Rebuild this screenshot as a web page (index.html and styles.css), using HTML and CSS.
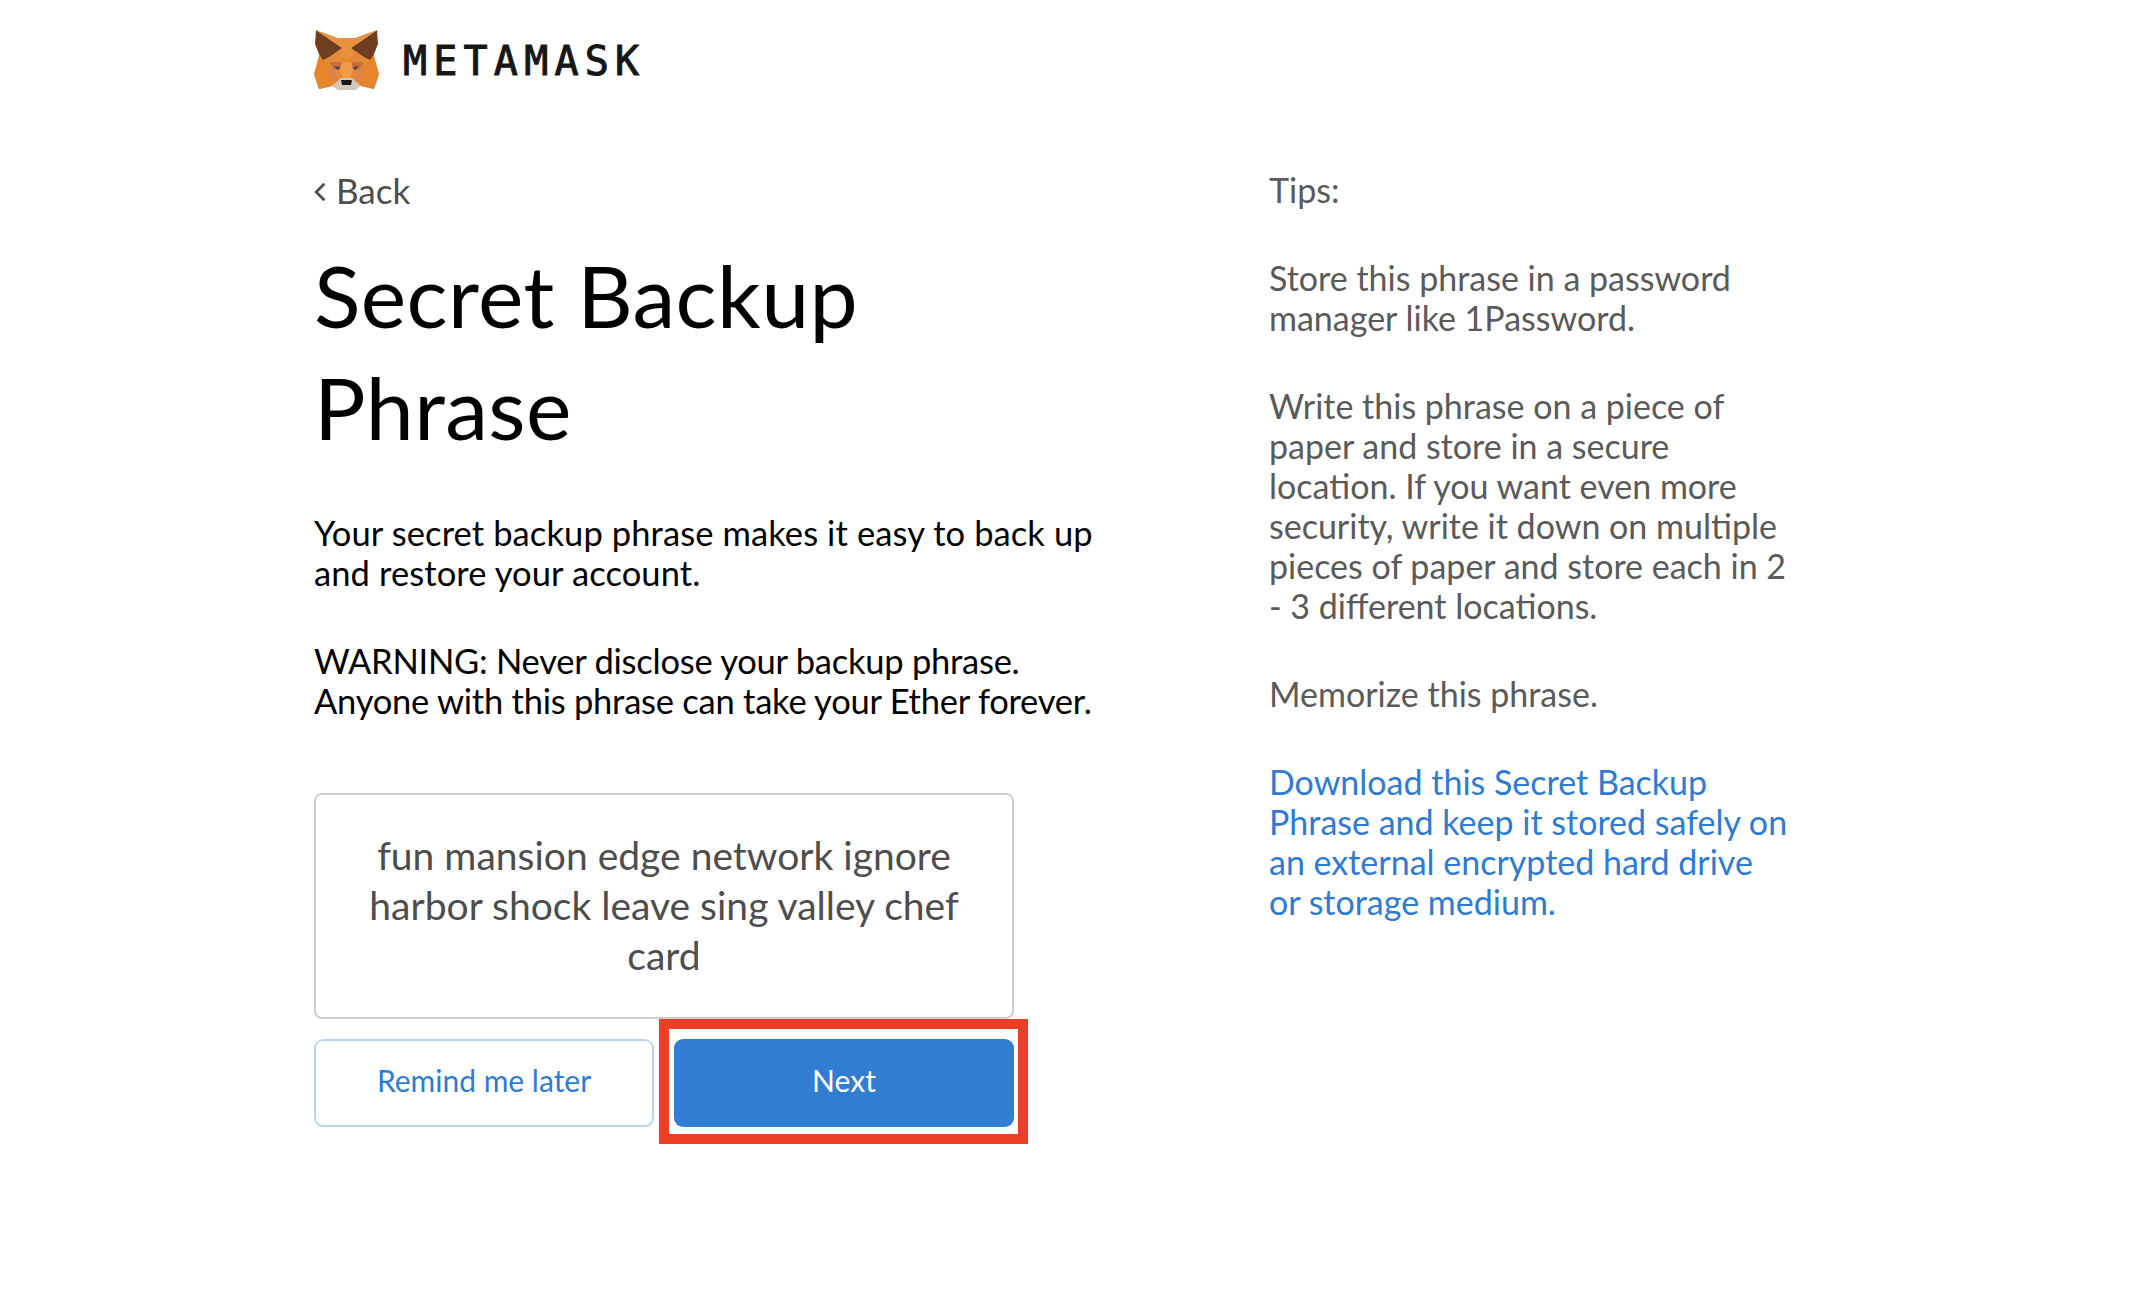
FILE: index.html
```html
<!DOCTYPE html>
<html lang="en">
<head>
<meta charset="utf-8">
<title>MetaMask</title>
<link rel="stylesheet" href="styles.css">
</head>
<body>
<div class="page">
  <header class="brand">
    <svg class="fox" viewBox="0 0 65 60" aria-hidden="true">
      <polygon fill="#e8842a" points="0,44 6,22 16,13 49,13 59,22 65,44 60,59 47,56 41,52 24,52 18,56 5,59"/>
      <polygon fill="#e9913f" points="24,8 41,8 39,26 33,30 26,26"/>
      <polygon fill="#e38a39" points="15,27 24,19 28,30 25,52 20,40 9,30"/>
      <polygon fill="#e38a39" points="50,27 41,19 37,30 40,52 45,40 56,30"/>
      <polygon fill="#c9703a" points="15,32 28,32 26,40 20,40"/>
      <polygon fill="#c9703a" points="50,32 37,32 39,40 45,40"/>
      <polygon fill="#f09a4a" points="28,32 37,32 39,40 36,48 29,48 26,40"/>
      <polygon fill="#e8842a" points="0,44 13,38 20,50 18,56 5,59"/>
      <polygon fill="#e8842a" points="65,44 52,38 45,50 47,56 60,59"/>
      <polygon fill="#d88356" points="13,38 20,40 25,52 20,50"/>
      <polygon fill="#d88356" points="52,38 45,40 40,52 45,50"/>
      <polygon fill="#6f3d1f" points="2,0 28,18 15,27 9,30 5,24 1,14"/>
      <polygon fill="#6f3d1f" points="63,0 37,18 50,27 56,30 60,24 64,14"/>
      <polygon fill="#e9913f" points="2,0 24,8 28,18"/>
      <polygon fill="#e9913f" points="63,0 41,8 37,18"/>
      <polygon fill="#3a3f55" points="20,36 26,37 24,40"/>
      <polygon fill="#3a3f55" points="45,36 39,37 41,40"/>
      <polygon fill="#d3c7bb" points="18,56 27,48 38,48 47,56 41,60 24,60"/>
      <polygon fill="#161616" points="27,50 38,50 37,55 28,55"/>
    </svg>
    <span class="wordmark">METAMASK</span>
  </header>
  <main class="columns">
    <section class="primary">
      <a class="back"><svg class="chevron" viewBox="0 0 11 18" aria-hidden="true"><path d="M9.500 1.500 2 9l7.500 7.500"/></svg>Back</a>
      <h1 class="title">Secret Backup Phrase</h1>
      <p class="lead">Your secret backup phrase makes it easy to back up and restore your account.</p>
      <p class="lead warning">WARNING: Never disclose your backup phrase. Anyone with this phrase can take your Ether forever.</p>
      <div class="phrase">fun mansion edge network ignore harbor shock leave sing valley chef card</div>
      <div class="actions">
        <button class="btn btn-ghost">Remind me later</button>
        <div class="highlight-wrap">
          <button class="btn btn-solid">Next</button>
          <span class="highlight"></span>
        </div>
      </div>
    </section>
    <aside class="tips">
      <p class="tip tip-head">Tips:</p>
      <p class="tip">Store this phrase in a password manager like 1Password.</p>
      <p class="tip">Write this phrase on a piece of paper and store in a secure location. If you want even more security, write it down on multiple pieces of paper and store each in 2 - 3 different locations.</p>
      <p class="tip">Memorize this phrase.</p>
      <p class="tip tip-link">Download this Secret Backup Phrase and keep it stored safely on an external encrypted hard drive or storage medium.</p>
    </aside>
  </main>
</div>
</body>
</html>
```
FILE: styles.css
```css
* { box-sizing: border-box; }
html, body { margin: 0; background: #fff; }
body { font-family: "Lato", "Liberation Sans", sans-serif; color: #000; height: 1298px; overflow: hidden; }
.page { padding: 30px 0 0 314px; }
.brand { display: flex; align-items: center; gap: 24px; height: 60px; }
.fox { width: 65px; height: 60px; flex: none; }
.wordmark { font-family: "DejaVu Sans Mono", monospace; font-size: 40px; line-height: 62px; padding-top: 2px; letter-spacing: 6.200px; color: #161616; font-weight: 400; -webkit-text-stroke: 1px #161616; }
.columns { display: grid; grid-template-columns: 955px 540px; margin-top: 80px; }
.back { display: flex; align-items: center; gap: 10px; height: 40px; font-size: 35px; line-height: 36px; color: #4d4d4d; }
.chevron { width: 12px; height: 20px; margin-top: 3px; fill: none; stroke: #4d4d4d; stroke-width: 2.500; }
.title { margin: 29px 0 0; width: 620px; font-size: 86px; line-height: 112px; font-weight: 400; color: #000; letter-spacing: 0.4px; }
.lead { margin: 50px 0 0; width: 800px; font-size: 34.500px; line-height: 40px; letter-spacing: 0.1px; }
.warning { margin-top: 48px; letter-spacing: -0.24px; }
.phrase { margin-top: 72px; width: 700px; height: 226px; padding: 35px 40px 0; border: 2px solid #cdcdcd; border-radius: 8px; text-align: center; font-size: 39px; line-height: 50px; color: #4d4d4d; }
.actions { display: flex; gap: 20px; margin-top: 20px; width: 700px; }
.btn { height: 88px; width: 340px; border-radius: 9px; font-family: inherit; font-size: 30px; padding: 0 0 6px; }
.btn-ghost { background: #fff; border: 2px solid #b6d6f2; color: #2f7bd1; }
.btn-solid { background: #317dd1; border: 0; color: #fff; display: block; }
.highlight-wrap { position: relative; }
.highlight { position: absolute; left: -15px; right: -14px; top: -20px; bottom: -17px; border: 10px solid #ed3f25; pointer-events: none; }
.tip { margin: 0 0 48px; width: 522px; font-size: 34px; line-height: 40px; color: #5a5a5a; }
.tip-link { color: #2f7bd1; }
```
